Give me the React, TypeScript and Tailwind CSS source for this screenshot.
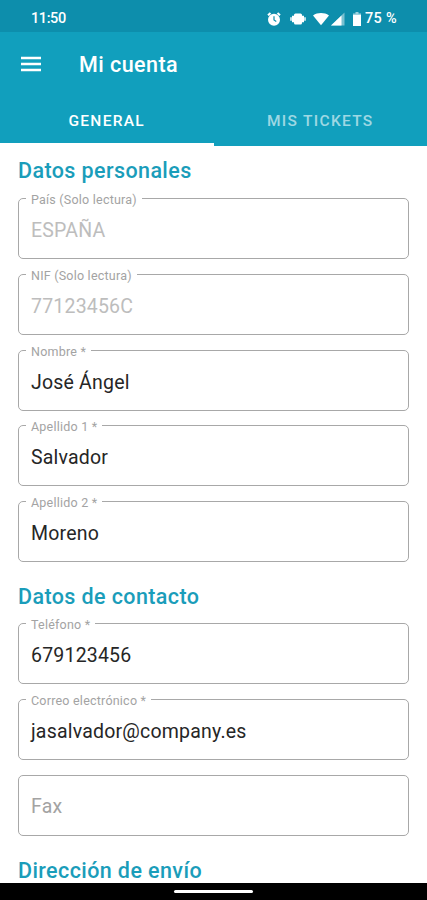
type FieldProps = {
  label: string;
  value?: string;
  readOnly?: boolean;
};

const personalFields: FieldProps[] = [
  { label: "País (Solo lectura)", value: "ESPAÑA", readOnly: true },
  { label: "NIF (Solo lectura)", value: "77123456C", readOnly: true },
  { label: "Nombre *", value: "José Ángel" },
  { label: "Apellido 1 *", value: "Salvador" },
  { label: "Apellido 2 *", value: "Moreno" },
];

const contactFields: FieldProps[] = [
  { label: "Teléfono *", value: "679123456" },
  { label: "Correo electrónico *", value: "jasalvador@company.es" },
  { label: "Fax" },
];

function Field({ label, value, readOnly }: FieldProps) {
  if (!value) {
    return (
      <div className="flex h-[61px] items-center rounded-[5px] border-[1.5px] border-[#a8a8a8] pl-[12px] pt-[3px] text-[19.5px] tracking-[0.2px] text-[#a3a3a3]">
        {label}
      </div>
    );
  }

  return (
    <fieldset className="h-[61px] min-w-0 rounded-[5px] border-[1.5px] border-[#a8a8a8]">
      {/* one pixel high, so that the label only cuts the border open */}
      <legend className="ml-[7px] h-px whitespace-nowrap px-[5px] text-[12.5px] leading-[3px] tracking-[0.22px] text-[#a3a3a3]">
        {label}
      </legend>
      <div
        className={
          readOnly
            ? "pl-[12px] pt-[17px] text-[19.5px] leading-[30px] tracking-[0.2px] text-[#bdbdbd]"
            : "pl-[12px] pt-[17px] text-[19.5px] leading-[30px] tracking-[0.2px] text-[#262626]"
        }
      >
        {value}
      </div>
    </fieldset>
  );
}

function SectionTitle({ children }: { children: string }) {
  return (
    <h2 className="h-[27px] whitespace-nowrap text-[21.5px] font-medium leading-[26px] tracking-[0.4px] text-[#1a9dba]">
      {children}
    </h2>
  );
}

function StatusBar() {
  return (
    <div className="flex h-8 shrink-0 items-center bg-[#0d8eac] pl-[31px] pr-[30px] pt-[5px] text-[14.5px] font-medium text-white">
      <span className="tracking-[-0.4px]">11:50</span>
      <div className="ml-auto flex items-center">
        <svg className="h-[14px] w-[14px]" viewBox="0 0 14 14">
          <circle cx="7" cy="7.7" r="6" fill="white" />
          <path d="M1 3.2 3.5 1M13 3.2 10.5 1" stroke="white" strokeWidth="2" />
          <path d="M7 4.3V8l2.3 1.4" fill="none" stroke="#0d8eac" strokeWidth="1.2" />
        </svg>
        <svg className="ml-[9px] h-[14px] w-[16px]" viewBox="0 0 16 14">
          <rect x="4" y="1.5" width="8" height="11" rx="1.5" fill="white" />
          <path d="M3 3.8v6.4M13 3.8v6.4" stroke="white" strokeWidth="2" />
          <path d="M1 5.3v3.4M15 5.3v3.4" stroke="white" strokeOpacity="0.8" strokeWidth="1.8" />
        </svg>
        <svg className="ml-[7px] h-[14px] w-[16px]" viewBox="0 0 17 14">
          <path d="M0 3.2C5-.2 12-.2 17 3.2L8.5 13.7Z" fill="white" />
        </svg>
        <svg className="ml-[2px] h-[14px] w-[14px]" viewBox="0 0 14 14">
          <path d="M13.5.5v13H0Z" fill="white" fillOpacity="0.45" />
          <path d="M10.5 3.4v10.1H0Z" fill="white" />
        </svg>
        <svg className="ml-[8px] h-[14px] w-[8px]" viewBox="0 0 8 14">
          <path d="M2.5 0h3v1.5H8V14H0V1.5h2.5Z" fill="white" fillOpacity="0.6" />
          <path d="M0 3h8v11H0Z" fill="white" />
        </svg>
        <span className="ml-[4px] whitespace-nowrap tracking-[0.3px]">75 %</span>
      </div>
    </div>
  );
}

export default function App() {
  return (
    <div className="flex h-[900px] w-[427px] flex-col overflow-hidden bg-white font-['Roboto',sans-serif]">
      <StatusBar />

      <header className="flex h-[114px] shrink-0 flex-col bg-[#119fbd] text-white">
        <div className="flex h-[64px] items-center pl-[21px]">
          <button aria-label="Menú" className="w-[20px]">
            <svg className="block h-[16px] w-[20px]" viewBox="0 0 20 16">
              <path d="M0 2h20M0 8h20M0 14h20" stroke="white" strokeWidth="2.5" />
            </svg>
          </button>
          <h1 className="ml-[38px] pt-[3px] text-[21.5px] font-medium tracking-[0.45px]">
            Mi cuenta
          </h1>
        </div>
        <nav className="grid h-[50px] grid-cols-2 text-center text-[15.5px] font-medium tracking-[1.3px]">
          <button className="border-b-[3px] border-white pt-[4px]">GENERAL</button>
          <button className="border-b-[3px] border-transparent pt-[4px] text-white/60">
            MIS TICKETS
          </button>
        </nav>
      </header>

      <main className="min-h-0 flex-1 overflow-hidden px-[18px] pt-[12px]">
        <SectionTitle>Datos personales</SectionTitle>
        <div className="mt-[13px] flex flex-col gap-[14.75px]">
          {personalFields.map((field) => (
            <Field key={field.label} {...field} />
          ))}
        </div>

        <div className="mt-[22px]">
          <SectionTitle>Datos de contacto</SectionTitle>
        </div>
        <div className="mt-[12px] flex flex-col gap-[14.75px]">
          {contactFields.map((field) => (
            <Field key={field.label} {...field} />
          ))}
        </div>

        <div className="mt-[22px]">
          <SectionTitle>Dirección de envío</SectionTitle>
        </div>
      </main>

      <div className="flex h-[17px] shrink-0 items-center justify-center bg-black">
        <div className="h-[3px] w-[79px] rounded-full bg-white" />
      </div>
    </div>
  );
}
